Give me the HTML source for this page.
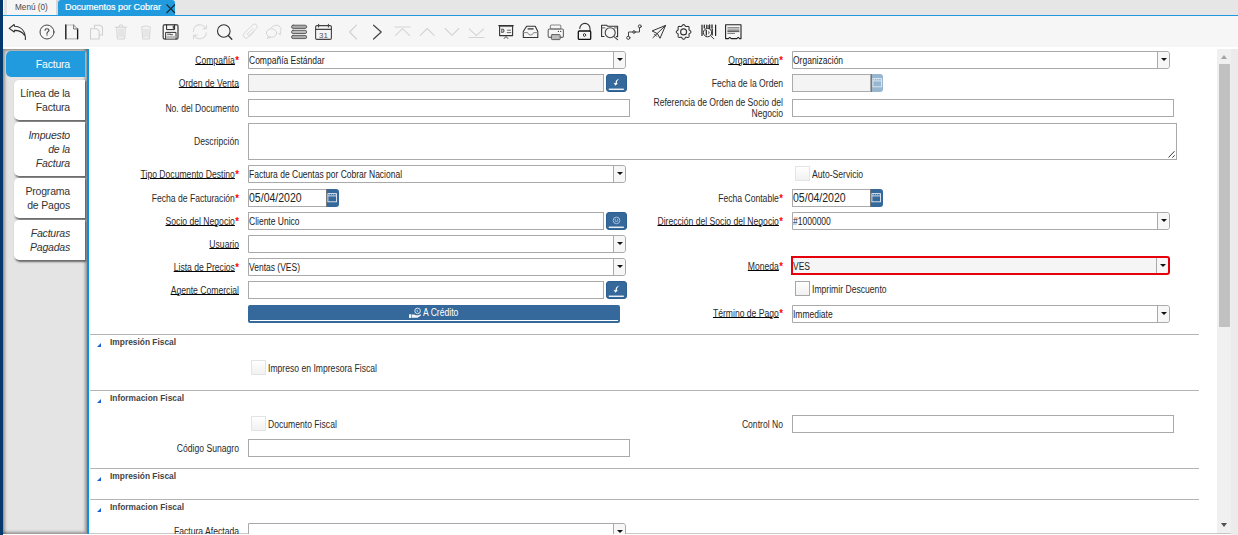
<!DOCTYPE html>
<html><head><meta charset="utf-8"><title>Documentos por Cobrar</title><style>
*{margin:0;padding:0}
html,body{width:1238px;height:535px;overflow:hidden;background:#fff;position:relative;font-family:"Liberation Sans", sans-serif}
.lb{position:absolute;width:300px;text-align:right;font-size:10px;color:#2a2a2a;white-space:nowrap;line-height:12px;transform:scaleX(0.86);transform-origin:100% 50%}
.lb u{text-decoration:underline;text-underline-offset:0px;text-decoration-color:#000}
.rq{color:#f00;font-size:11px;font-weight:bold;position:relative;top:0px;margin-left:0.5px;line-height:0}
.tb{position:absolute;border:1px solid #aaa;font-size:10px;color:#222;line-height:16px;padding-left:0;white-space:nowrap;overflow:visible}
.tx{position:absolute;left:0;top:1px;transform:scaleX(0.85);transform-origin:0 50%}
.cbb{position:absolute;right:0;top:0;width:11px;border-left:1px solid #aaa;background:#f7f7f7;border-radius:0 3px 3px 0}
.tri{position:absolute;left:3px;top:6px;width:0;height:0;border-left:3px solid transparent;border-right:3px solid transparent;border-top:3px solid #111}
.cb{position:absolute;width:13px;height:13px;border:1px solid #e4e4e4;background:linear-gradient(#fff,#f1f1f1);border-radius:0}
.ct{position:absolute;font-size:10px;color:#2a2a2a;white-space:nowrap;line-height:12px;transform:scaleX(0.86);transform-origin:0 50%}
.bb{position:absolute;border-radius:3px;overflow:hidden}
.bb svg{position:absolute;left:0;top:0}
.dt{font-size:12px;color:#222;display:inline-block;position:relative;top:-1px;transform:scaleX(1.032);transform-origin:0 50%}
.tabt{position:absolute;font-size:9px;line-height:12px;white-space:nowrap}
.vt{position:absolute;text-align:right;font-size:10.5px;color:#333;white-space:nowrap;letter-spacing:-0.2px}
.sh{position:absolute;font-size:9px;font-weight:bold;color:#444;white-space:nowrap;line-height:12px;transform:scaleX(0.93);transform-origin:0 50%}
</style></head>
<body>
<div style="position:absolute;left:0;top:0;width:3px;height:535px;background:#033a6b"></div><div style="position:absolute;left:3px;top:0px;width:1235px;height:15px;background:#e6e6e6"></div><div style="position:absolute;left:3px;top:0px;width:1px;height:15px;background:#fafafa"></div><div style="position:absolute;left:4px;top:0px;width:53px;height:15px;background:#f5f5f5;border-left:3px solid #e4e4e4;box-sizing:border-box"></div><div style="position:absolute;left:56px;top:0px;width:2px;height:15px;background:#d8d8d8"></div><div class="tabt" style="left:15px;top:1px;color:#4a4a4a;transform:scaleX(0.91);transform-origin:0 50%">Menú (0)</div><div style="position:absolute;left:58px;top:0px;width:117px;height:15px;background:#219bdd;border-radius:3px 3px 0 0"></div><div class="tabt" style="left:65px;top:1px;color:#fff;-webkit-text-stroke:0.2px #fff">Documentos por Cobrar</div><svg style="position:absolute;left:165px;top:3px" width="11" height="11" viewBox="0 0 11 11"><path d="M1.5 1.5L10 10M10 1.5L1.5 10" stroke="#1b2a36" stroke-width="1.1"/></svg><div style="position:absolute;left:3px;top:15px;width:1235px;height:1px;background:#1f99dd"></div><div style="position:absolute;left:3px;top:16px;width:1235px;height:32px;background:#f6f6f6"></div><div style="position:absolute;left:3px;top:47px;width:1235px;height:2px;background:#ffffff"></div><div style="position:absolute;left:3px;top:49px;width:84px;height:485px;background:#e4e4e4;box-shadow:inset 2px 2px 3px rgba(0,0,0,.35), inset -2px -2px 3px rgba(0,0,0,.35)"></div><div style="position:absolute;left:87px;top:49px;width:2px;height:485px;background:#0793e0"></div><div style="position:absolute;left:6px;top:51px;width:79px;height:26px;background:#219bdd;border-radius:5px 0 0 5px"></div><div class="vt" style="left:6px;top:51px;width:64px;height:26px;line-height:26px;color:#fff">Factura</div><div style="position:absolute;left:14px;top:80px;width:71px;height:40px;background:#fff;border-radius:5px 0 0 5px;box-shadow:1px 1.5px 2px rgba(0,0,0,.55)"></div><div class="vt" style="left:6px;top:86px;width:64px;line-height:14px;">Línea de la<br>Factura</div><div style="position:absolute;left:14px;top:122px;width:71px;height:54px;background:#fff;border-radius:5px 0 0 5px;box-shadow:1px 1.5px 2px rgba(0,0,0,.55)"></div><div class="vt" style="left:6px;top:128px;width:64px;line-height:14px;font-style:italic;">Impuesto<br>de la<br>Factura</div><div style="position:absolute;left:14px;top:178px;width:71px;height:40px;background:#fff;border-radius:5px 0 0 5px;box-shadow:1px 1.5px 2px rgba(0,0,0,.55)"></div><div class="vt" style="left:6px;top:184px;width:64px;line-height:14px;">Programa<br>de Pagos</div><div style="position:absolute;left:14px;top:220px;width:71px;height:40px;background:#fff;border-radius:5px 0 0 5px;box-shadow:1px 1.5px 2px rgba(0,0,0,.55)"></div><div class="vt" style="left:6px;top:226px;width:64px;line-height:14px;font-style:italic;">Facturas<br>Pagadas</div><div style="position:absolute;left:1217px;top:49px;width:14px;height:485px;background:#f0f0f0"></div><div style="position:absolute;left:1231px;top:49px;width:7px;height:486px;background:#ebebeb"></div><div style="position:absolute;left:1221px;top:55px;width:0;height:0;border-left:3.5px solid transparent;border-right:3.5px solid transparent;border-bottom:4px solid #a3a3a3"></div><div style="position:absolute;left:1219px;top:64px;width:11px;height:263px;background:#c1c1c1"></div><div style="position:absolute;left:1221px;top:523px;width:0;height:0;border-left:3.5px solid transparent;border-right:3.5px solid transparent;border-top:4px solid #505050"></div><div style="position:absolute;left:89px;top:533px;width:1142px;height:1px;background:#c8c8c8"></div><div class="lb" style="left:-61px;top:55px;"><u>Compañía</u><span class="rq">*</span></div><div class="tb" style="left:248px;top:51px;width:376px;height:16px;background:#fff;border:1px solid #aaa;border-radius:0 3px 3px 0"><div class="tx">Compañía Estándar</div><div class="cbb" style="height:16px"><div class="tri"></div></div></div><div class="lb" style="left:483px;top:55px;"><u>Organización</u><span class="rq">*</span></div><div class="tb" style="left:792px;top:51px;width:376px;height:16px;background:#fff;border:1px solid #aaa;border-radius:0 3px 3px 0"><div class="tx">Organización</div><div class="cbb" style="height:16px"><div class="tri"></div></div></div><div class="lb" style="left:-61px;top:78px;"><u>Orden de Venta</u></div><div class="tb" style="left:248px;top:74px;width:354px;height:16px;background:#f4f4f4;border-color:#aaa;"><div class="tx"></div></div><div class="bb" style="left:606px;top:74px;width:21px;height:18px;background:#35699b;box-sizing:border-box;border:1px solid #2c5f90;border-radius:3px;"><svg style="left:-1px;top:-1px" width="21" height="18" viewBox="0 0 21 18"><path d="M13.6 4.6 C10.6 5.2 9.4 7.2 9.6 9.2 L7.6 8.9 L9.6 11.8 L11.8 8.9 L10.8 9 C10.9 7.2 12 5.6 13.6 4.6Z" fill="#fff"/><rect x="2.8" y="14.6" width="15" height="1.3" fill="#fff"/></svg></div><div class="lb" style="left:483px;top:78px;">Fecha de la Orden</div><div class="tb" style="left:792px;top:74px;width:77px;height:16px;background:#f4f4f4;border-color:#aaa;"><div class="tx"></div></div><div class="bb" style="left:871px;top:74px;width:12px;height:18px;background:#98b6d0;border-radius:0 3px 3px 0;border-left:1px solid #777;box-sizing:border-box;"><svg width="13" height="18" viewBox="0 0 13 18"><rect x="0.9" y="4.6" width="8.6" height="8.2" fill="none" stroke="#e2ebf3" stroke-width="0.9"/><path d="M0.9 6.9 H9.5" stroke="#e2ebf3" stroke-width="0.9"/><path d="M2 5.3 H8.5" stroke="#e2ebf3" stroke-width="0.6" stroke-dasharray="1 1"/></svg></div><div class="lb" style="left:-61px;top:103px;">No. del Documento</div><div class="tb" style="left:248px;top:99px;width:380px;height:16px;background:#fff;border-color:#aaa;"><div class="tx"></div></div><div class="lb" style="left:483px;top:97px;line-height:11px;height:22px">Referencia de Orden de Socio del<br>Negocio</div><div class="tb" style="left:792px;top:99px;width:380px;height:16px;background:#fff;border-color:#aaa;"><div class="tx"></div></div><div class="lb" style="left:-61px;top:136px;">Descripción</div><div class="tb" style="left:248px;top:123px;width:927px;height:35px;background:#fff;border-color:#aaa;"><div class="tx"></div></div><svg style="position:absolute;left:1166px;top:148px" width="10" height="11" viewBox="0 0 10 11"><path d="M2.5 9.5L8.5 3.2M6.4 9.6L8.6 7.3" stroke="#3a3a3a" stroke-width="1"/></svg><div class="lb" style="left:-61px;top:169px;"><u>Tipo Documento Destino</u><span class="rq">*</span></div><div class="tb" style="left:248px;top:165px;width:376px;height:16px;background:#fff;border:1px solid #aaa;border-radius:0 3px 3px 0"><div class="tx">Factura de Cuentas por Cobrar Nacional</div><div class="cbb" style="height:16px"><div class="tri"></div></div></div><div class="cb" style="left:795px;top:166px;border-color:#e4e4e4"></div><div class="ct" style="left:812px;top:169px">Auto-Servicio</div><div class="lb" style="left:-61px;top:193px;">Fecha de Facturación<span class="rq">*</span></div><div class="tb" style="left:248px;top:189px;width:77px;height:16px;background:#fff;border-color:#aaa;"><div class="tx"><span class="dt">05/04/2020</span></div></div><div class="bb" style="left:326px;top:189px;width:13px;height:18px;background:#35699b;border-radius:0 3px 3px 0;border-left:1px solid #777;box-sizing:border-box;"><svg width="13" height="18" viewBox="0 0 13 18"><rect x="0.9" y="4.6" width="8.6" height="8.2" fill="none" stroke="#e2ebf3" stroke-width="0.9"/><path d="M0.9 6.9 H9.5" stroke="#e2ebf3" stroke-width="0.9"/><path d="M2 5.3 H8.5" stroke="#e2ebf3" stroke-width="0.6" stroke-dasharray="1 1"/></svg></div><div class="lb" style="left:483px;top:193px;">Fecha Contable<span class="rq">*</span></div><div class="tb" style="left:792px;top:189px;width:77px;height:16px;background:#fff;border-color:#aaa;"><div class="tx"><span class="dt">05/04/2020</span></div></div><div class="bb" style="left:870px;top:189px;width:13px;height:18px;background:#35699b;border-radius:0 3px 3px 0;border-left:1px solid #777;box-sizing:border-box;"><svg width="13" height="18" viewBox="0 0 13 18"><rect x="0.9" y="4.6" width="8.6" height="8.2" fill="none" stroke="#e2ebf3" stroke-width="0.9"/><path d="M0.9 6.9 H9.5" stroke="#e2ebf3" stroke-width="0.9"/><path d="M2 5.3 H8.5" stroke="#e2ebf3" stroke-width="0.6" stroke-dasharray="1 1"/></svg></div><div class="lb" style="left:-61px;top:216px;"><u>Socio del Negocio</u><span class="rq">*</span></div><div class="tb" style="left:248px;top:212px;width:354px;height:16px;background:#fff;border-color:#aaa;"><div class="tx">Cliente Unico</div></div><div class="bb" style="left:606px;top:212px;width:21px;height:18px;background:#35699b;box-sizing:border-box;border:1px solid #2c5f90;border-radius:3px;"><svg style="left:-1px;top:-1px" width="21" height="18" viewBox="0 0 21 18"><circle cx="10.5" cy="8.4" r="3.3" fill="none" stroke="#a9c0d6" stroke-width="1"/><path d="M9.3 6.8v2.4M11.7 6.8v2.4M9.3 9.4h2.4" stroke="#a9c0d6" stroke-width="0.8"/><rect x="2.8" y="14.6" width="15" height="1.3" fill="#fff"/></svg></div><div class="lb" style="left:483px;top:216px;"><u>Dirección del Socio del Negocio</u><span class="rq">*</span></div><div class="tb" style="left:792px;top:212px;width:376px;height:16px;background:#fff;border:1px solid #aaa;border-radius:0 3px 3px 0"><div class="tx">#1000000</div><div class="cbb" style="height:16px"><div class="tri"></div></div></div><div class="lb" style="left:-61px;top:239px;"><u>Usuario</u></div><div class="tb" style="left:248px;top:235px;width:376px;height:16px;background:#fff;border:1px solid #aaa;border-radius:0 3px 3px 0"><div class="tx"></div><div class="cbb" style="height:16px"><div class="tri"></div></div></div><div class="lb" style="left:-61px;top:262px;"><u>Lista de Precios</u><span class="rq">*</span></div><div class="tb" style="left:248px;top:258px;width:376px;height:16px;background:#fff;border:1px solid #aaa;border-radius:0 3px 3px 0"><div class="tx">Ventas (VES)</div><div class="cbb" style="height:16px"><div class="tri"></div></div></div><div class="lb" style="left:483px;top:261px;"><u>Moneda</u><span class="rq">*</span></div><div class="tb" style="left:791px;top:256px;width:375px;height:15px;background:#f5f5f5;border:2px solid #e5000b;border-radius:0 3px 3px 0"><div class="tx">VES</div><div class="cbb" style="height:15px"><div class="tri"></div></div></div><div class="lb" style="left:-61px;top:285px;"><u>Agente Comercial</u></div><div class="tb" style="left:248px;top:281px;width:354px;height:16px;background:#fff;border-color:#aaa;"><div class="tx"></div></div><div class="bb" style="left:606px;top:281px;width:21px;height:18px;background:#35699b;box-sizing:border-box;border:1px solid #2c5f90;border-radius:3px;"><svg style="left:-1px;top:-1px" width="21" height="18" viewBox="0 0 21 18"><path d="M13.6 4.6 C10.6 5.2 9.4 7.2 9.6 9.2 L7.6 8.9 L9.6 11.8 L11.8 8.9 L10.8 9 C10.9 7.2 12 5.6 13.6 4.6Z" fill="#fff"/><rect x="2.8" y="14.6" width="15" height="1.3" fill="#fff"/></svg></div><div class="cb" style="left:795px;top:281px;border-color:#a8a8a8"></div><div class="ct" style="left:812px;top:284px">Imprimir Descuento</div><div class="bb" style="left:248px;top:305px;width:372px;height:18px;background:#35699b;border-radius:2px"><div style="position:absolute;left:2px;right:2px;top:15px;height:1px;background:#fff"></div><svg style="position:absolute;left:160px;top:2px" width="14" height="13" viewBox="0 0 14 13"><circle cx="9.6" cy="3.9" r="2.8" fill="none" stroke="#e8eef5" stroke-width="0.9"/><path d="M9.2 2.6v1.8l1.2 .9" stroke="#e8eef5" stroke-width="0.7" fill="none"/><path d="M1 7.3h2.1v3.8H1z" fill="#f2f5f9"/><path d="M3.6 7.6h2.6l1.6 .7h2.2l2.9-1v1.1l-3.4 2.4H3.6z" fill="#f2f5f9"/></svg><div class="ct" style="left:175px;top:2px;color:#fff">A Crédito</div></div><div class="lb" style="left:483px;top:308px;"><u>Término de Pago</u><span class="rq">*</span></div><div class="tb" style="left:792px;top:305px;width:376px;height:16px;background:#fff;border:1px solid #aaa;border-radius:0 3px 3px 0"><div class="tx">Immediate</div><div class="cbb" style="height:16px"><div class="tri"></div></div></div><div style="position:absolute;left:90px;top:334px;width:1109px;height:1px;background:#b4b4b4"></div><div style="position:absolute;left:97px;top:343px;width:0;height:0;border-left:4.5px solid transparent;border-bottom:4.5px solid #1a62d6"></div><div class="sh" style="left:110px;top:336px">Impresión Fiscal</div><div class="cb" style="left:251px;top:360px;border-color:#e4e4e4"></div><div class="ct" style="left:268px;top:363px">Impreso en Impresora Fiscal</div><div style="position:absolute;left:90px;top:390px;width:1109px;height:1px;background:#b4b4b4"></div><div style="position:absolute;left:97px;top:399px;width:0;height:0;border-left:4.5px solid transparent;border-bottom:4.5px solid #1a62d6"></div><div class="sh" style="left:110px;top:392px">Informacion Fiscal</div><div class="cb" style="left:251px;top:416px;border-color:#e4e4e4"></div><div class="ct" style="left:268px;top:419px">Documento Fiscal</div><div class="lb" style="left:483px;top:419px;">Control No</div><div class="tb" style="left:792px;top:415px;width:380px;height:16px;background:#fff;border-color:#aaa;"><div class="tx"></div></div><div class="lb" style="left:-61px;top:443px;">Código Sunagro</div><div class="tb" style="left:248px;top:439px;width:380px;height:16px;background:#fff;border-color:#aaa;"><div class="tx"></div></div><div style="position:absolute;left:90px;top:468px;width:1109px;height:1px;background:#b4b4b4"></div><div style="position:absolute;left:97px;top:477px;width:0;height:0;border-left:4.5px solid transparent;border-bottom:4.5px solid #1a62d6"></div><div class="sh" style="left:110px;top:470px">Impresión Fiscal</div><div style="position:absolute;left:90px;top:499px;width:1109px;height:1px;background:#b4b4b4"></div><div style="position:absolute;left:97px;top:508px;width:0;height:0;border-left:4.5px solid transparent;border-bottom:4.5px solid #1a62d6"></div><div class="sh" style="left:110px;top:501px">Informacion Fiscal</div><div class="lb" style="left:-61px;top:526px;">Factura Afectada</div><div class="tb" style="left:248px;top:523px;width:376px;height:16px;background:#fff;border:1px solid #aaa;border-radius:0 3px 3px 0"><div class="tx"></div><div class="cbb" style="height:16px"><div class="tri"></div></div></div><div style="position:absolute;left:89px;top:534px;width:1142px;height:1px;background:#fff"></div>
<svg style="position:absolute;left:0;top:0" width="760" height="48" viewBox="0 0 760 48" fill="none" stroke-linecap="round" stroke-linejoin="round">
<!-- undo -->
<path d="M14.5 26.2 L14.2 24.5 L9.2 28.4 L14.2 32 L14.5 30.4 C19.5 30.4 22.5 32.2 24.4 35.2 M14.5 26.2 C21 26.5 25.6 31 25.4 39.5" stroke="#303030" stroke-width="1.1"/>
<!-- help -->
<circle cx="47" cy="32" r="7" stroke="#444" stroke-width="1"/>
<path d="M45 30.2 C45 28.2 49 28.2 49 30.2 C49 31.6 47 31.8 47 33.4" stroke="#444" stroke-width="1.1"/>
<circle cx="47" cy="35" r="0.7" fill="#444"/>
<!-- new -->
<path d="M65.8 25 H73.6 L77.6 29 V38.8 H65.8 Z" stroke="#bbb" stroke-width="1.2"/>
<path d="M65.8 25 V38.8 M77.6 29 V38.8" stroke="#1a1a1a" stroke-width="1.3"/>
<path d="M73.6 25 V29 H77.6" stroke="#777" stroke-width="1"/>
<!-- copy (disabled) -->
<path d="M94.5 27.5 V25.2 H100.5 L102.5 27.2 V35 H99.5" stroke="#d0d0d0" stroke-width="1.1"/>
<path d="M90.5 28.8 H96.8 L99.2 31.2 V39 H90.5 Z" stroke="#d0d0d0" stroke-width="1.1"/>
<!-- trash 1 -->
<path d="M115.3 27.2 H126.7 M116.6 27.5 L117.4 39 H124.6 L125.4 27.5 M119 29 V37 M121 29 V37 M123 29 V37 M119 27 L119.7 25 H122.3 L123 27" stroke="#d3d3d3" stroke-width="1"/>
<!-- trash 2 -->
<path d="M141.5 27 Q146 24.5 150.5 27 M141.8 27.5 L142.7 39 H149.4 L150.3 27.5 M144 29 V37 M146 29 V37 M148 29 V37" stroke="#d6d6d6" stroke-width="1"/>
<!-- save -->
<rect x="163.2" y="24.8" width="14.8" height="14.2" rx="1.6" stroke="#555" stroke-width="1.4"/>
<path d="M166.6 25 V29.6 H174.6 V25 M173.3 26.2 V28.4" stroke="#222" stroke-width="1"/>
<path d="M165.6 39 V32.4 H176 V39" stroke="#333" stroke-width="1"/>
<rect x="166.2" y="35.8" width="9.2" height="3" fill="#bbb"/>
<path d="M167.5 34.2 H170.5 M170.5 34.6 H172.5" stroke="#444" stroke-width="0.9"/>
<!-- refresh (disabled) -->
<path d="M193.5 31.5 A6.3 6.3 0 0 1 205.6 28.6 M206.3 32.8 A6.3 6.3 0 0 1 194.4 35.2" stroke="#d8d8d8" stroke-width="1.1"/>
<path d="M206.5 25.2 V28.8 H202.8 M193.5 38.8 V35.2 H197.2" stroke="#d8d8d8" stroke-width="1.1"/>
<!-- search -->
<circle cx="223.8" cy="31" r="6.3" stroke="#333" stroke-width="1.1"/>
<path d="M228.3 35.5 L231.8 39.2" stroke="#333" stroke-width="1.3"/>
<!-- attach (disabled) -->
<path d="M251.5 30.2 L245.8 35.9 A2.9 2.9 0 0 1 241.7 31.8 L250.2 23.3 A2.6 2.6 0 0 1 253.9 27 L247.2 33.7 A1.2 1.2 0 0 1 245.5 32 L250.6 26.9" stroke="#d4d4d4" stroke-width="0.9" transform="translate(2.5 1.5)"/>
<!-- chat (disabled) -->
<ellipse cx="271.5" cy="33" rx="5.1" ry="4.2" stroke="#d0d0d0" stroke-width="0.9"/>
<path d="M268.5 36.5 L267.2 38.5 L270 37.2" stroke="#d0d0d0" stroke-width="0.9"/>
<path d="M271.5 27.5 A5 4.2 0 0 1 280.5 31.5 L280.2 34.8 L278.5 33.5" stroke="#d0d0d0" stroke-width="0.9"/>
<!-- menu -->
<rect x="291.5" y="25.2" width="15.2" height="3.2" rx="1.6" fill="#aaa" stroke="#555" stroke-width="0.9"/>
<rect x="291.5" y="30.3" width="15.2" height="3.2" rx="1.6" fill="#bbb" stroke="#555" stroke-width="0.9"/>
<rect x="291.5" y="35.4" width="15.2" height="3.2" rx="1.6" fill="#aaa" stroke="#555" stroke-width="0.9"/>
<!-- calendar -->
<rect x="315.6" y="25.6" width="15.8" height="13.8" rx="1.4" stroke="#444" stroke-width="1.1"/>
<path d="M315.6 29.4 H331.4 M318.6 24.2 V27 M328.4 24.2 V27" stroke="#444" stroke-width="1.1"/>
<text x="323.5" y="37.6" font-family="Liberation Sans" font-size="8" fill="#555" text-anchor="middle" stroke="none">31</text>
<!-- prev / next -->
<path d="M356.5 25.2 L349.6 32 L356.5 39" stroke="#d0d0d0" stroke-width="1.1"/>
<path d="M373.6 25.2 L381.2 32 L373.6 39" stroke="#444" stroke-width="1.2"/>
<!-- first / up / down / last -->
<path d="M395 27 H410 M395.6 35.4 L402.5 28.6 L409.5 35.4" stroke="#d4d4d4" stroke-width="1.1"/>
<path d="M420.3 35.4 L427.2 28.5 L434.2 35.4" stroke="#d4d4d4" stroke-width="1.1"/>
<path d="M445.2 28.5 L452 35.4 L458.8 28.5" stroke="#d4d4d4" stroke-width="1.1"/>
<path d="M469.2 28.8 L476.4 35.6 L483.6 28.8 M469 37.5 H484" stroke="#d4d4d4" stroke-width="1.1"/>
<!-- presentation -->
<path d="M498.8 25.6 H513.2" stroke="#333" stroke-width="1.2"/>
<path d="M499.3 26.6 H512.7" stroke="#bbb" stroke-width="1"/>
<rect x="499.6" y="26" width="13" height="9.6" stroke="#333" stroke-width="1.1"/>
<path d="M501.8 29 V32.5 M503 29.2 Q505 30.8 503 32.4" stroke="#555" stroke-width="1.1"/>
<path d="M507.5 30.2 H510.5 M507.2 32.6 H510.8" stroke="#666" stroke-width="1"/>
<path d="M504.2 38.5 L506 36.5 L507.8 38.5" stroke="#333" stroke-width="0.9"/>
<!-- inbox -->
<path d="M526.6 26.2 H535.2 L537.8 31.5 V37.5 H523.3 V31.5 Z" stroke="#333" stroke-width="1.1"/>
<path d="M523.5 32.6 H527.6 Q528.2 35 530.6 35 Q533 35 533.6 32.6 H537.6" stroke="#888" stroke-width="1"/>
<rect x="527.6" y="28.2" width="6" height="1.4" fill="#444"/>
<!-- printer -->
<rect x="550.4" y="25" width="10.4" height="4" rx="1" stroke="#888" stroke-width="1.1"/>
<rect x="548.2" y="29" width="15.2" height="8.4" rx="1.2" stroke="#666" stroke-width="1.1"/>
<circle cx="558.4" cy="31.4" r="0.6" fill="#333"/>
<circle cx="560.7" cy="31.4" r="0.6" fill="#333"/>
<rect x="551.4" y="34.6" width="8.8" height="5" rx="0.8" fill="#bbb" stroke="#555" stroke-width="0.9"/>
<!-- lock -->
<path d="M579.8 28.4 A5.1 5.1 0 0 1 590 28.5 V31" stroke="#333" stroke-width="1.1"/>
<rect x="578.3" y="31" width="12.4" height="8.4" rx="1" stroke="#111" stroke-width="1.3"/>
<ellipse cx="584.5" cy="35" rx="1.1" ry="1.5" stroke="#333" stroke-width="0.9"/>
<!-- folder search -->
<path d="M604 36.5 H601.6 V25.2 H606.5 L607.5 26.2 H617.6 V36.6 H616.4" stroke="#333" stroke-width="1.1"/>
<path d="M602.2 27.9 H605 M614.4 27.9 H617" stroke="#666" stroke-width="1"/>
<circle cx="610.2" cy="32.7" r="5" stroke="#444" stroke-width="1.1"/>
<path d="M614.2 36.8 L617.6 39.6" stroke="#444" stroke-width="1.1"/>
<!-- workflow -->
<circle cx="628.3" cy="37.8" r="1.6" stroke="#333" stroke-width="0.9"/>
<path d="M628.5 36.2 V32 H633 M635 32 H639.5 V27.8" stroke="#444" stroke-width="1"/>
<circle cx="634" cy="32" r="1.3" stroke="#444" stroke-width="0.9" fill="#aaa"/>
<circle cx="639.8" cy="26.3" r="1.5" stroke="#333" stroke-width="0.9"/>
<!-- send -->
<path d="M652.5 30.8 L665.6 25.4 L660 38.3 L657.6 34 Z M665.6 25.4 L653 37.6 M654.5 34.2 L656.5 36.2" stroke="#333" stroke-width="1"/>
<!-- gear -->
<path d="M683.60 24.55 L684.07 24.67 L684.51 24.98 L684.89 25.43 L685.21 25.89 L685.51 26.27 L685.84 26.50 L686.23 26.56 L686.71 26.51 L687.27 26.41 L687.85 26.37 L688.38 26.45 L688.80 26.70 L689.05 27.12 L689.13 27.65 L689.09 28.23 L688.99 28.79 L688.94 29.27 L689.00 29.66 L689.23 29.99 L689.61 30.29 L690.07 30.61 L690.52 30.99 L690.83 31.43 L690.95 31.90 L690.83 32.37 L690.52 32.81 L690.07 33.19 L689.61 33.51 L689.23 33.81 L689.00 34.14 L688.94 34.53 L688.99 35.01 L689.09 35.57 L689.13 36.15 L689.05 36.68 L688.80 37.10 L688.38 37.35 L687.85 37.43 L687.27 37.39 L686.71 37.29 L686.23 37.24 L685.84 37.30 L685.51 37.53 L685.21 37.91 L684.89 38.37 L684.51 38.82 L684.07 39.13 L683.60 39.25 L683.13 39.13 L682.69 38.82 L682.31 38.37 L681.99 37.91 L681.69 37.53 L681.36 37.30 L680.97 37.24 L680.49 37.29 L679.93 37.39 L679.35 37.43 L678.82 37.35 L678.40 37.10 L678.15 36.68 L678.07 36.15 L678.11 35.57 L678.21 35.01 L678.26 34.53 L678.20 34.14 L677.97 33.81 L677.59 33.51 L677.13 33.19 L676.68 32.81 L676.37 32.37 L676.25 31.90 L676.37 31.43 L676.68 30.99 L677.13 30.61 L677.59 30.29 L677.97 29.99 L678.20 29.66 L678.26 29.27 L678.21 28.79 L678.11 28.23 L678.07 27.65 L678.15 27.12 L678.40 26.70 L678.82 26.45 L679.35 26.37 L679.93 26.41 L680.49 26.51 L680.97 26.56 L681.36 26.50 L681.69 26.27 L681.99 25.89 L682.31 25.43 L682.69 24.98 L683.13 24.67 Z" stroke="#333" stroke-width="1.05"/>
<circle cx="683.6" cy="31.9" r="3" stroke="#333" stroke-width="1.1"/>
<!-- barcode search -->
<path d="M702 25 V35.5 M704.3 25 V28 M706.8 25 V28 M712.2 29 V35 M715.6 25 V35.5" stroke="#222" stroke-width="1.2"/>
<path d="M709.6 25 V29 M712 25 V28" stroke="#333" stroke-width="1.4"/>
<rect x="707.6" y="25" width="1.4" height="3.5" fill="#888"/>
<circle cx="707.6" cy="32.6" r="4.2" fill="#f6f6f6" stroke="#333" stroke-width="1"/>
<path d="M706.3 30.3 V35" stroke="#222" stroke-width="1.2"/>
<path d="M708.2 30.5 L710 32.6 L708.2 34.7 Z" fill="#888"/>
<path d="M710.6 35.8 L713.8 38.8" stroke="#444" stroke-width="1"/>
<!-- report -->
<path d="M725.6 24.8 H741 V38.6 H739.4 Q738.2 36.4 737 38.6 H731 Q729.8 36.4 728.6 38.6 H725.6 Z" stroke="#222" stroke-width="1.1"/>
<path d="M727.8 27.6 H739 M727.8 29.1 H739 M727.8 30.6 H739" stroke="#777" stroke-width="0.9"/>
<path d="M727.8 31.6 H739" stroke="#444" stroke-width="0.9"/>
<path d="M727.8 33.4 H734.5" stroke="#666" stroke-width="0.9"/>
</svg>

</body></html>
